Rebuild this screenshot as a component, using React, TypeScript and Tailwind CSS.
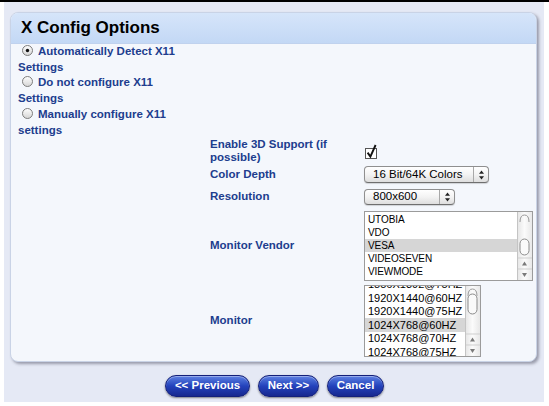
import React from "react";

const F = { fontFamily: '"Liberation Sans", Arial, sans-serif' };

function Radio({ on }: { on?: boolean }) {
  return (
    <svg width="11" height="11" viewBox="0 0 11 11" className="inline-block align-[-1px]">
      <defs>
        <linearGradient id={on ? "rg1" : "rg0"} x1="0" y1="0" x2="0" y2="1">
          <stop offset="0" stopColor="#ffffff" />
          <stop offset="1" stopColor="#d4d4d4" />
        </linearGradient>
      </defs>
      <circle cx="5.5" cy="5.5" r="5" fill={`url(#${on ? "rg1" : "rg0"})`} stroke="#7d7d7d" strokeWidth="1" />
      {on && <circle cx="5.5" cy="5.5" r="1.7" fill="#111" />}
    </svg>
  );
}

function Check() {
  return (
    <svg width="14" height="15" viewBox="0 0 14 15">
      <rect x="0.5" y="4.5" width="11" height="10" fill="#fff" stroke="#555" />
      <path d="M2.6 8.6 L5.4 12.6 L10.6 1" fill="none" stroke="#111" strokeWidth="1.9" />
    </svg>
  );
}

function Arrows() {
  return (
    <svg width="7" height="10" viewBox="0 0 7 10">
      <path d="M3.5 0.5 L6 3.8 L1 3.8 Z" fill="#222" />
      <path d="M3.5 9.5 L6 6.2 L1 6.2 Z" fill="#222" />
    </svg>
  );
}

function Popup({ label, w, h }: { label: string; w: string; h: string }) {
  return (
    <div
      className={`${w} ${h} flex items-stretch rounded-[4px] border border-[#8f8f8f] border-b-[#6f6f6f] bg-gradient-to-b from-[#ffffff] via-[#f3f3f3] to-[#dedede] shadow-[0_1px_1px_rgba(0,0,0,0.15)]`}
    >
      <div className="flex-1 flex items-center pl-[8px] text-[11.5px] text-black leading-none" style={F}>
        {label}
      </div>
      <div className="w-[15px] border-l border-[#a8a8a8] flex items-center justify-center">
        <Arrows />
      </div>
    </div>
  );
}

function Scrollbar({ h, thumbTop, thumbH }: { h: number; thumbTop: number; thumbH: number }) {
  return (
    <svg width="15" height={h} viewBox={`0 0 15 ${h}`} className="block">
      <defs>
        <linearGradient id={`tr${h}`} x1="0" y1="0" x2="1" y2="0">
          <stop offset="0" stopColor="#e4e4e4" />
          <stop offset="0.5" stopColor="#fbfbfb" />
          <stop offset="1" stopColor="#e8e8e8" />
        </linearGradient>
      </defs>
      <rect x="0" y="0" width="15" height={h} fill={`url(#tr${h})`} />
      <line x1="0.5" y1="0" x2="0.5" y2={h} stroke="#c4c4c4" />
      <path d={`M3 ${10} Q3 3 7.5 3 Q12 3 12 ${10}`} fill="none" stroke="#9a9a9a" />
      <rect x="3" y={thumbTop} width="9" height={thumbH} rx="4.5" fill="#fafafa" stroke="#8a8a8a" />
      <line x1="1" y1={h - 22} x2="15" y2={h - 22} stroke="#cfcfcf" />
      <line x1="1" y1={h - 11} x2="15" y2={h - 11} stroke="#cfcfcf" />
      <path d={`M7.5 ${h - 18.5} L10 ${h - 14.5} L5 ${h - 14.5} Z`} fill="#7a7a7a" />
      <path d={`M7.5 ${h - 3} L10 ${h - 7} L5 ${h - 7} Z`} fill="#7a7a7a" />
    </svg>
  );
}

function ListBox({
  items,
  sel,
  w,
  h,
  rowH,
  offset,
  font,
  thumbTop,
  thumbH,
}: {
  items: string[];
  sel: number;
  w: string;
  h: number;
  rowH: string;
  offset: string;
  font: string;
  thumbTop: number;
  thumbH: number;
}) {
  return (
    <div className={`${w} flex border border-[#9b9b9b] bg-white overflow-hidden`} style={{ height: h }}>
      <div className="flex-1 overflow-hidden">
        <div className={`${offset} flex flex-col`}>
          {items.map((it, i) => (
            <div
              key={it}
              className={`${rowH} ${font} flex items-center pl-[3px] text-black ${i === sel ? "bg-[#d6d6d6]" : ""}`}
              style={F}
            >
              {it}
            </div>
          ))}
        </div>
      </div>
      <Scrollbar h={h - 2} thumbTop={thumbTop} thumbH={thumbH} />
    </div>
  );
}

function Btn({ children, w }: { children: React.ReactNode; w: string }) {
  return (
    <div
      className={`${w} h-[22px] rounded-[11px] border border-[#14207a] bg-gradient-to-b from-[#5f80e2] via-[#2442bc] to-[#17288f] flex items-center justify-center text-white font-bold text-[11.5px] shadow-[0_1px_2px_rgba(0,0,0,0.45),inset_0_1px_0_rgba(255,255,255,0.35)]`}
      style={F}
    >
      {children}
    </div>
  );
}

export default function App() {
  const lbl = "text-[#203d8e] font-bold text-[11.5px]";
  return (
    <div className="w-[549px] h-[406px] bg-white border-t-2 border-black overflow-hidden" style={F}>
      <div className="ml-[4px] w-[540px] h-[400px] bg-[#e5e9f5] pt-[10px] pl-[6px]">
        <div className="w-[527px] h-[350px] rounded-[8px] bg-[#f4f7fc] border border-[#c9d3e6] shadow-[2px_2px_3px_rgba(60,60,80,0.45)] overflow-hidden flex flex-col">
          <div className="h-[31px] flex items-center pl-[10px] bg-gradient-to-b from-[#d6e5fa] to-[#c3d8f5] border-b border-[#c0d2ee]">
            <span className="text-[17px] font-bold text-black" style={F}>
              X Config Options
            </span>
          </div>
          <div className={`pl-[7px] ${lbl} leading-[15.7px]`} style={F}>
            <div>
              <span className="ml-[4px] mr-[5px]">
                <Radio on />
              </span>
              Automatically Detect X11
              <br />
              Settings
            </div>
            <div>
              <span className="ml-[4px] mr-[5px]">
                <Radio />
              </span>
              Do not configure X11
              <br />
              Settings
            </div>
            <div>
              <span className="ml-[4px] mr-[5px]">
                <Radio />
              </span>
              Manually configure X11
              <br />
              settings
            </div>
          </div>
          <div className="ml-[199px] flex flex-col">
            <div className="flex items-center">
              <div className={`w-[154px] ${lbl} leading-[13px]`} style={F}>
                Enable 3D Support (if
                <br />
                possible)
              </div>
              <div className="ml-[1px]">
                <Check />
              </div>
            </div>
            <div className="flex items-center mt-[2px]">
              <div className={`w-[154px] ${lbl}`} style={F}>
                Color Depth
              </div>
              <Popup label="16 Bit/64K Colors" w="w-[125px]" h="h-[17px]" />
            </div>
            <div className="flex items-center mt-[5px]">
              <div className={`w-[154px] ${lbl}`} style={F}>
                Resolution
              </div>
              <Popup label="800x600" w="w-[91px]" h="h-[16px]" />
            </div>
            <div className="flex items-center mt-[5px]">
              <div className={`w-[154px] ${lbl}`} style={F}>
                Monitor Vendor
              </div>
              <ListBox
                items={["UTOBIA", "VDO", "VESA", "VIDEOSEVEN", "VIEWMODE"]}
                sel={2}
                w="w-[169px]"
                h={70}
                rowH="h-[13px]"
                offset="mt-[1px]"
                font="text-[10px] tracking-[-0.1px]"
                thumbTop={27}
                thumbH={16}
              />
            </div>
            <div className="flex items-center mt-[4px]">
              <div className={`w-[154px] ${lbl}`} style={F}>
                Monitor
              </div>
              <ListBox
                items={[
                  "1856X1392@75HZ",
                  "1920X1440@60HZ",
                  "1920X1440@75HZ",
                  "1024X768@60HZ",
                  "1024X768@70HZ",
                  "1024X768@75HZ",
                ]}
                sel={3}
                w="w-[117px]"
                h={72}
                rowH="h-[13.5px]"
                offset="mt-[-8px]"
                font="text-[11px]"
                thumbTop={8}
                thumbH={20}
              />
            </div>
          </div>
        </div>
        <div className="mt-[13px] w-[527px] flex justify-center gap-[8px] pl-[2px]">
          <Btn w="w-[85px]">&lt;&lt; Previous</Btn>
          <Btn w="w-[61px]">Next &gt;&gt;</Btn>
          <Btn w="w-[57px]">Cancel</Btn>
        </div>
      </div>
    </div>
  );
}
